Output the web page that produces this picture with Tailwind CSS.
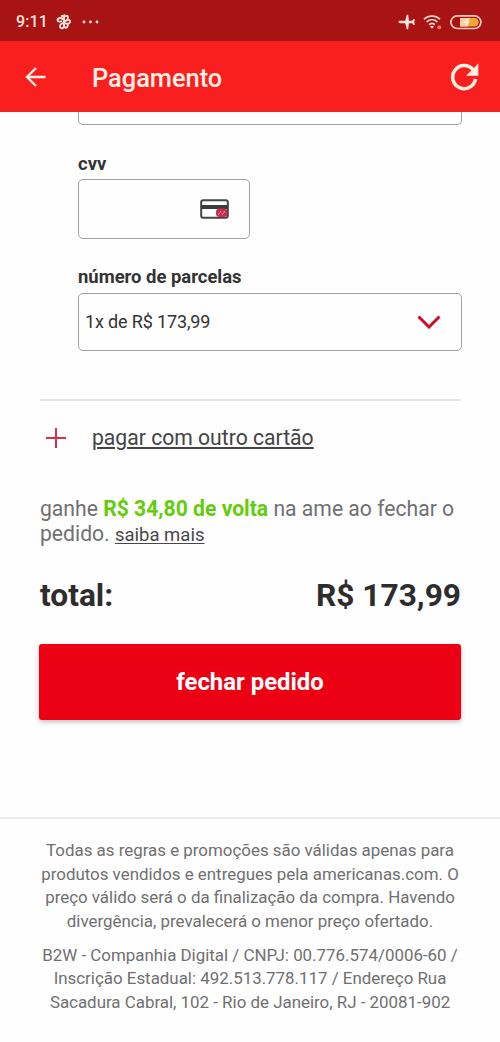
<!DOCTYPE html>
<html lang="pt-BR">
<head>
<meta charset="utf-8">
<meta name="viewport" content="width=device-width, initial-scale=1">
<title>Pagamento</title>
<script src="https://cdn.jsdelivr.net/npm/@tailwindcss/browser@4"></script>
</head>
<body class="bg-[#fefefe] font-[Roboto,sans-serif] text-[#333]">
<div class="flex h-[1042px] w-[500px] flex-col overflow-hidden">
  <div class="flex h-[41px] shrink-0 items-center bg-[#a81314] pt-[3px] pr-[18px] pl-4 text-[#ffe3dc]">
    <span class="text-[16px] leading-5 font-medium tracking-[0.1px]">9:11</span>
    <svg class="ml-[8px] h-4 w-4" viewBox="0 0 16 16" fill="none" stroke="currentColor" stroke-width="1.9"><path d="M5 2.500 8 1.500v5M8 6.500C6 3 2 3.500 1.500 6c0 2 3 2 4.500 1M8 3c2-2 4-1.500 4 .5S10 7 8 7M9 7.500c3-3 5.500-1.500 5 .5s-2 2-4 1.500M8 7v6c-1 2-4 1.500-4-.5S6 9 8 9M8.500 9.500c3-.5 4 1 3 3s-3 1.500-3-.5"/></svg>
    <svg class="ml-[10px] h-4 w-[18px]" viewBox="0 0 18 16" fill="currentColor"><circle cx="2" cy="8" r="1.400"/><circle cx="8.500" cy="8" r="1.400"/><circle cx="15" cy="8" r="1.400"/></svg>
    <svg class="ml-auto h-4 w-[18px]" viewBox="0 0 18 16" fill="currentColor"><path d="M.5 8c0-.8.7-1.200 1.500-1.200h5.200L8.800.8h1.400l.7 6h3.300L15.500 5h1.300L16.300 8l.5 3h-1.300l-1.300-1.800h-3.300l-.7 6H8.800L7.200 9.200H2C1.200 9.200.5 8.800.5 8Z"/></svg>
    <svg class="ml-[7px] h-4 w-[19px]" viewBox="0 0 19 16" fill="none" stroke="currentColor" stroke-width="1.700"><path d="M1 5.200c4.700-4.300 11.300-4.300 16 0M3.600 8c3.200-3 7.600-3 10.800 0M6.100 10.700c1.800-1.700 4-1.700 5.800 0"/><path d="m9 14.700-2-2.300c1.200-1 2.800-1 4 0Z" fill="currentColor" stroke="none"/><circle cx="16.300" cy="13.300" r="2" fill="#ff6b66" stroke="none"/></svg>
    <svg class="ml-2 h-4 w-8" viewBox="0 0 32 16"><rect x=".9" y="1.900" width="30" height="12.600" rx="6.300" fill="none" stroke="#ffc9bd" stroke-width="1.700"/><path d="M10 4h14.500a4.200 4.200 0 0 1 0 8.400H10Z" fill="#edaa32"/><path d="M10 4h10l-2 8.400h-8Z" fill="#f2cfaa"/><path d="m18 4-5 5h3l-1 3.400 5-5h-3Z" fill="#fff1d0"/></svg>
  </div>
  <header class="flex h-[71px] shrink-0 items-center border-b border-[#ea2a27] bg-[#f91f1e] pt-[2px] pr-5 pl-[25px] text-[#fff0e5]">
    <svg class="h-5 w-[22px]" viewBox="0 0 22 20" fill="none" stroke="currentColor" stroke-width="2.400"><path d="M20.500 10H2M11 1 2 10l9 9"/></svg>
    <h1 class="ml-[45px] pt-[2px] text-[25.400px] leading-8 font-medium">Pagamento</h1>
    <svg class="ml-auto h-[30px] w-[30px]" viewBox="0 0 30 30" fill="none" stroke="currentColor" stroke-width="3.500"><path d="M25.500 17a11.500 11.500 0 1 1-2.300-9"/><path d="M28.300 1.500v12.200H16.100Z" fill="currentColor" stroke="none"/></svg>
  </header>

  <main class="flex h-[707px] shrink-0 flex-col border-b-2 border-[#ececec] pr-[39px] pl-[39px]">
    <div class="ml-[39px] h-[13px] w-[384px] shrink-0 rounded-b-[5px] border border-t-0 border-[#a0a0a0]"></div>
    <label class="mt-[27px] ml-[39px] h-6 text-[18.500px] leading-6 font-bold">cvv</label>
    <div class="mt-[3px] ml-[39px] flex h-[60px] w-[172px] shrink-0 items-center justify-end rounded-[5px] border border-[#a0a0a0] pr-[20px]">
      <svg class="h-5 w-[29px]" viewBox="0 0 29 20"><rect x="1.200" y="1.200" width="26.600" height="17.600" rx="2" fill="#fff" stroke="#454545" stroke-width="2"/><path d="M1 6h27v4H1Z" fill="#3c3c3c"/><rect x="16" y="9.500" width="11.500" height="8.500" rx="3.500" fill="#c62f50"/><path d="m18 16 3-4M22 16l3-4" stroke="#ef8198" stroke-width="1"/></svg>
    </div>
    <label class="mt-[26px] ml-[39px] h-6 text-[18.450px] leading-6 font-bold">número de parcelas</label>
    <div class="mt-[4px] ml-[39px] flex h-[58px] w-[384px] shrink-0 items-center justify-between rounded-[5px] border border-[#a0a0a0] pr-5 pl-[6px]">
      <span class="text-[18px] leading-6 tracking-[-0.150px]">1x de R$ 173,99</span>
      <svg class="h-[14px] w-6" viewBox="0 0 24 14" fill="none" stroke="#c90f2c" stroke-width="3"><path d="m1.500 1.500 10.500 10.500L22.500 1.500"/></svg>
    </div>
    <div class="mt-[48px] ml-px h-[2px] shrink-0 bg-[#e5e5e5]"></div>
    <div class="mt-[23px] flex h-7 shrink-0 items-center pl-[6px]">
      <svg class="h-[22px] w-[22px]" viewBox="0 0 22 22" stroke="#d7304e" stroke-width="2"><path d="M11 1v20M1 11h20"/></svg>
      <a class="ml-[25px] text-[21.150px] leading-7 whitespace-nowrap text-[#444] underline decoration-[1.500px] underline-offset-2">pagar com outro cartão</a>
    </div>
    <p class="mt-[44px] ml-px h-[50px] shrink-0 text-[21.150px] leading-[25px] whitespace-nowrap text-[#707070]">ganhe <b class="text-[#65cc0b]">R$ 34,80 de volta</b> na ame ao fechar o<br>pedido. <a class="text-[18.500px] leading-none text-[#484848] underline decoration-1 underline-offset-2">saiba mais</a></p>
    <div class="mt-[30px] ml-px flex h-10 shrink-0 items-center justify-between text-[31.700px] leading-10 font-bold text-[#2d2d2d]"><span>total:</span><span>R$ 173,99</span></div>
    <button class="mt-[28px] h-[76px] w-[422px] shrink-0 rounded-[3px] bg-[#eb0014] pt-px text-[23.900px] font-bold text-white shadow-[0_2px_5px_rgba(0,0,0,0.25)]">fechar pedido</button>
  </main>

  <footer class="flex flex-col gap-[10px] pt-[20px] text-center text-[16.900px] leading-[23.650px] whitespace-nowrap text-[#707070]">
    <p>Todas as regras e promoções são válidas apenas para<br>produtos vendidos e entregues pela americanas.com. O<br>preço válido será o da finalização da compra. Havendo<br>divergência, prevalecerá o menor preço ofertado.</p>
    <p>B2W - Companhia Digital / CNPJ: 00.776.574/0006-60 /<br>Inscrição Estadual: 492.513.778.117 / Endereço Rua<br>Sacadura Cabral, 102 - Rio de Janeiro, RJ - 20081-902</p>
  </footer>
</div>
</body>
</html>
